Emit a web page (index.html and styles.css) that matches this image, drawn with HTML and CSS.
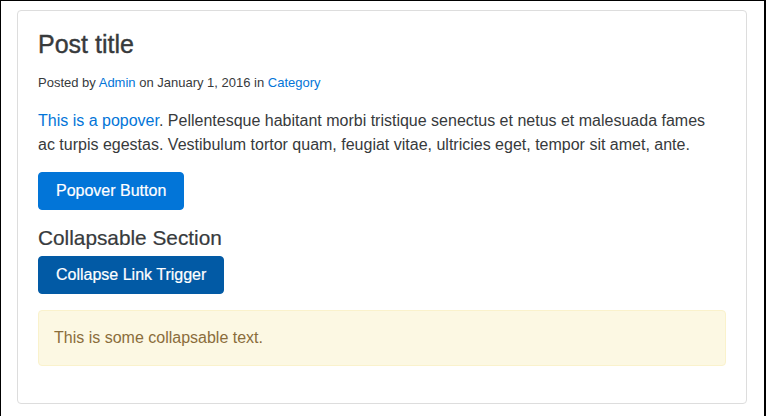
FILE: index.html
```html
<!DOCTYPE html>
<html lang="en">
<head>
    <meta charset="UTF-8">
    <title>Post title</title>

    <link rel="stylesheet" href="styles.css">
</head>
<body>
<div class="frame">
    <article class="card">
        <h1 class="post-title">Post title</h1>
        <p class="post-meta">Posted by <a href="#">Admin</a> on January 1, 2016 in <a href="#">Category</a></p>
        <p class="post-body"><a href="#">This is a popover</a>. Pellentesque habitant morbi tristique senectus et netus et malesuada fames ac turpis egestas. Vestibulum tortor quam, feugiat vitae, ultricies eget, tempor sit amet, ante.</p>
        <button class="btn" type="button">Popover Button</button>

        <h2 class="section-title">Collapsable Section</h2>
        <a class="btn btn-active" href="#">Collapse Link Trigger</a>
        <div class="alert">This is some collapsable text.</div>
    </article>
</div>
</body>
</html>
```

FILE: styles.css
```css
html, body {
    margin: 0;
    padding: 0;

    font-family: 'Liberation Sans', Helvetica, Arial, sans-serif;
    font-size: 16px;
    line-height: 1.5;
    color: #373a3c;
    background: #fff;
}

a {
    color: #0275d8;
    text-decoration: none;
}

.frame {
    box-sizing: border-box;
    min-height: 100vh;
    padding: 9px 17px 12px 16px;
    border: 1px solid #000;
    border-right-width: 2px;
}

.card {
    border: 1px solid #ddd;
    border-radius: 4px;
    padding: 20px 20px 37px;
}

.post-title {
    margin: 0 0 14px;
    font-size: 25px;
    font-weight: normal;
    line-height: 1.1;
    -webkit-text-stroke: 0.4px #373a3c;
}

.post-meta {
    margin: 0 0 17px;
    font-size: 13px;
}

.post-body {
    margin: 0 0 15px;
}

.btn {
    display: inline-block;
    box-sizing: border-box;
    padding: 6px 17px;
    border: 1px solid #0275d8;
    border-radius: 4px;
    background: #0275d8;
    color: #fff;
    font: inherit;
    line-height: 24px;
    -webkit-text-stroke: 0.2px #fff;
    cursor: pointer;
}

.btn-active {
    border-color: #025aa5;
    background: #025aa5;
}

.section-title {
    margin: 16px 0 5px;
    font-size: 20.8px;
    font-weight: normal;
    line-height: 1.2;
    -webkit-text-stroke: 0.2px #373a3c;
}

.alert {
    margin-top: 16px;
    padding: 15px;
    border: 1px solid #faf2cc;
    border-radius: 4px;
    background: #fcf8e3;
    color: #8a6d3b;
}
```
